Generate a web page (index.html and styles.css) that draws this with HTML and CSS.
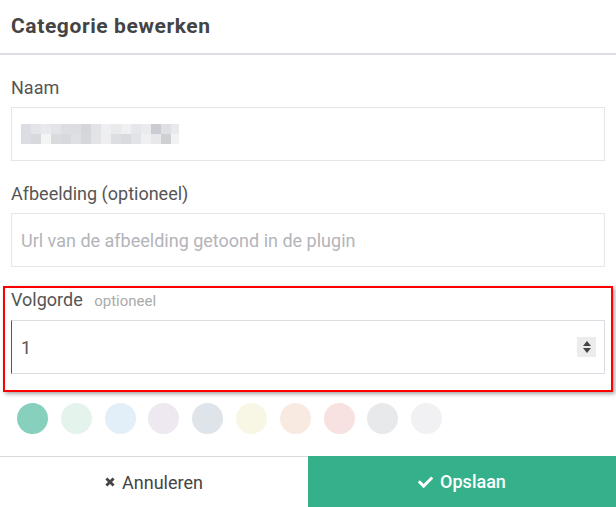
FILE: index.html
```html
<!DOCTYPE html>
<html lang="nl">

<head>
    <meta charset="UTF-8">
    <meta name="viewport" content="width=device-width, initial-scale=1.0">
    <title>Categorie bewerken</title>
    <link rel="stylesheet" href="styles.css">
</head>

<body>
    <div class="modal">
        <div class="modal-header">
            <h2>Categorie bewerken</h2>
        </div>

        <div class="modal-body">
            <div class="form-group">
                <label>Naam</label>
                <div class="field">
                    <!-- name is pixelated -->
                    <svg class="mosaic" width="158" height="20" viewBox="0 0 158 20">
                        <rect x="0" y="0" width="10" height="10" fill="#dcdde2"/>
                        <rect x="10" y="0" width="10" height="10" fill="#e4e5e9"/>
                        <rect x="20" y="0" width="10" height="10" fill="#e8e9ec"/>
                        <rect x="30" y="0" width="10" height="10" fill="#e3e4e8"/>
                        <rect x="40" y="0" width="10" height="10" fill="#dddee2"/>
                        <rect x="50" y="0" width="10" height="10" fill="#dcdde1"/>
                        <rect x="60" y="0" width="10" height="10" fill="#d5d6da"/>
                        <rect x="70" y="0" width="10" height="10" fill="#e2e3e6"/>
                        <rect x="80" y="0" width="10" height="10" fill="#eeeff1"/>
                        <rect x="90" y="0" width="10" height="10" fill="#e9eaec"/>
                        <rect x="100" y="0" width="10" height="10" fill="#eff0f1"/>
                        <rect x="110" y="0" width="10" height="10" fill="#e6e7ea"/>
                        <rect x="120" y="0" width="10" height="10" fill="#eaebed"/>
                        <rect x="130" y="0" width="10" height="10" fill="#cbccd1"/>
                        <rect x="140" y="0" width="10" height="10" fill="#dfe0e3"/>
                        <rect x="150" y="0" width="8" height="10" fill="#e8e9ec"/>
                        <rect x="0" y="10" width="10" height="10" fill="#dcdde2"/>
                        <rect x="10" y="10" width="10" height="10" fill="#d8d9dd"/>
                        <rect x="20" y="10" width="10" height="10" fill="#f4f4f5"/>
                        <rect x="30" y="10" width="10" height="10" fill="#dadbdf"/>
                        <rect x="40" y="10" width="10" height="10" fill="#d8d9dd"/>
                        <rect x="50" y="10" width="10" height="10" fill="#dfe0e3"/>
                        <rect x="60" y="10" width="10" height="10" fill="#d6d7db"/>
                        <rect x="70" y="10" width="10" height="10" fill="#e3e4e7"/>
                        <rect x="80" y="10" width="10" height="10" fill="#eeeef0"/>
                        <rect x="90" y="10" width="10" height="10" fill="#dddee1"/>
                        <rect x="100" y="10" width="10" height="10" fill="#d9dade"/>
                        <rect x="110" y="10" width="10" height="10" fill="#e2e3e6"/>
                        <rect x="120" y="10" width="10" height="10" fill="#f0f0f2"/>
                        <rect x="130" y="10" width="10" height="10" fill="#e7e8ea"/>
                        <rect x="140" y="10" width="10" height="10" fill="#cfd0d4"/>
                        <rect x="150" y="10" width="8" height="10" fill="#f2f2f3"/>
                    </svg>
                </div>
            </div>

            <div class="form-group">
                <label>Afbeelding (optioneel)</label>
                <div class="field">
                    <span class="placeholder">Url van de afbeelding getoond in de plugin</span>
                </div>
            </div>

            <div class="form-group highlighted">
                <label>Volgorde <small>optioneel</small></label>
                <div class="field field-focus">
                    <span class="value">1</span>
                    <span class="spinner">
                        <span class="arrow-up"></span>
                        <span class="arrow-down"></span>
                    </span>
                </div>
            </div>

            <div class="colors">
                <span class="swatch c1"></span>
                <span class="swatch c2"></span>
                <span class="swatch c3"></span>
                <span class="swatch c4"></span>
                <span class="swatch c5"></span>
                <span class="swatch c6"></span>
                <span class="swatch c7"></span>
                <span class="swatch c8"></span>
                <span class="swatch c9"></span>
                <span class="swatch c10"></span>
            </div>
        </div>

        <div class="modal-footer">
            <button class="btn btn-cancel">
                <svg width="10" height="10" viewBox="0 0 10 10">
                    <path d="M1.4 1.4L8.6 8.6M8.6 1.4L1.4 8.6" stroke="#444" stroke-width="2.8" fill="none"/>
                </svg>
                Annuleren
            </button>
            <button class="btn btn-save">
                <svg width="15" height="13" viewBox="0 0 512 440">
                    <path fill="#fff" d="M173.9 431.4l-166.4-166.4c-10-10-10-26.2 0-36.2l36.2-36.2c10-10 26.2-10 36.2 0L192 304.7 432.1 64.6c10-10 26.2-10 36.2 0l36.2 36.2c10 10 10 26.2 0 36.2l-294.4 294.4c-10 10-26.2 10-36.2 0z"/>
                </svg>
                Opslaan
            </button>
        </div>
    </div>
</body>

</html>
```

FILE: styles.css
```css
* {
    box-sizing: border-box;
    margin: 0;
    padding: 0;
    font-family: Roboto, 'Open Sans', sans-serif;
}

body {
    background: #fff;
    width: 616px;
    height: 507px;
    overflow: hidden;
}

.modal {
    display: flex;
    flex-direction: column;
    height: 507px;
}

.modal-header {
    height: 55px;
    border-bottom: 2px solid #dddee4;
    padding-left: 11px;
}

.modal-header h2 {
    font-size: 21px;
    font-weight: bold;
    letter-spacing: 0.6px;
    line-height: 53px;
    color: #444;
}

.modal-body {
    padding: 0 11px;
}

.form-group {
    margin-top: 21px;
}

.form-group label {
    display: block;
    font-size: 18px;
    line-height: 24px;
    color: #555;
    margin-bottom: 7px;
}

.form-group label small {
    font-size: 15px;
    color: #aaa;
    margin-left: 7px;
}

.field {
    height: 54px;
    border: 1px solid #e5e6eb;
    display: flex;
    align-items: center;
    padding: 0 9px;
    font-size: 18px;
}

.field-focus {
    border-color: #dcdde3;
    border-left-color: #9a2a98;
}

.placeholder {
    color: #b3b4ba;
}

.value {
    color: #555;
    flex: 1;
}

/* number stepper */
.spinner {
    width: 19px;
    height: 20px;
    background: #ececec;
    display: flex;
    flex-direction: column;
    align-items: center;
    justify-content: center;
    gap: 2px;
    margin-right: -1px;
}

.arrow-up {
    border-left: 4px solid transparent;
    border-right: 4px solid transparent;
    border-bottom: 5px solid #444;
}

.arrow-down {
    border-left: 4px solid transparent;
    border-right: 4px solid transparent;
    border-top: 5px solid #444;
}

.highlighted {
    position: relative;
}

.highlighted::after {
    content: '';
    position: absolute;
    left: -8px;
    right: -8px;
    top: -2px;
    bottom: -18px;
    border: 2px solid #f00;
    box-shadow: 2px 2px 4px rgba(0, 0, 0, 0.35);
    pointer-events: none;
}

.colors {
    display: flex;
    gap: 12.8px;
    margin-top: 29px;
    padding-left: 6px;
}

.swatch {
    width: 31px;
    height: 31px;
    border-radius: 50%;
}

.c1 { background: #88d0be; }
.c2 { background: #e4f4ed; }
.c3 { background: #e2eef8; }
.c4 { background: #eee8f1; }
.c5 { background: #dfe3ea; }
.c6 { background: #f8f7e5; }
.c7 { background: #f9eae1; }
.c8 { background: #f8e1e1; }
.c9 { background: #e7e9ea; }
.c10 { background: #f1f1f3; }

.modal-footer {
    margin-top: auto;
    display: flex;
    height: 51px;
}

.btn {
    flex: 1;
    border: none;
    font-size: 18px;
    display: flex;
    align-items: center;
    justify-content: center;
    gap: 7px;
    cursor: pointer;
}

.btn-cancel {
    background: #fff;
    color: #444;
    border-top: 1px solid #d8d8df;
}

.btn-save {
    background: #34b08a;
    color: #fff;
    font-weight: 500;
}
```
